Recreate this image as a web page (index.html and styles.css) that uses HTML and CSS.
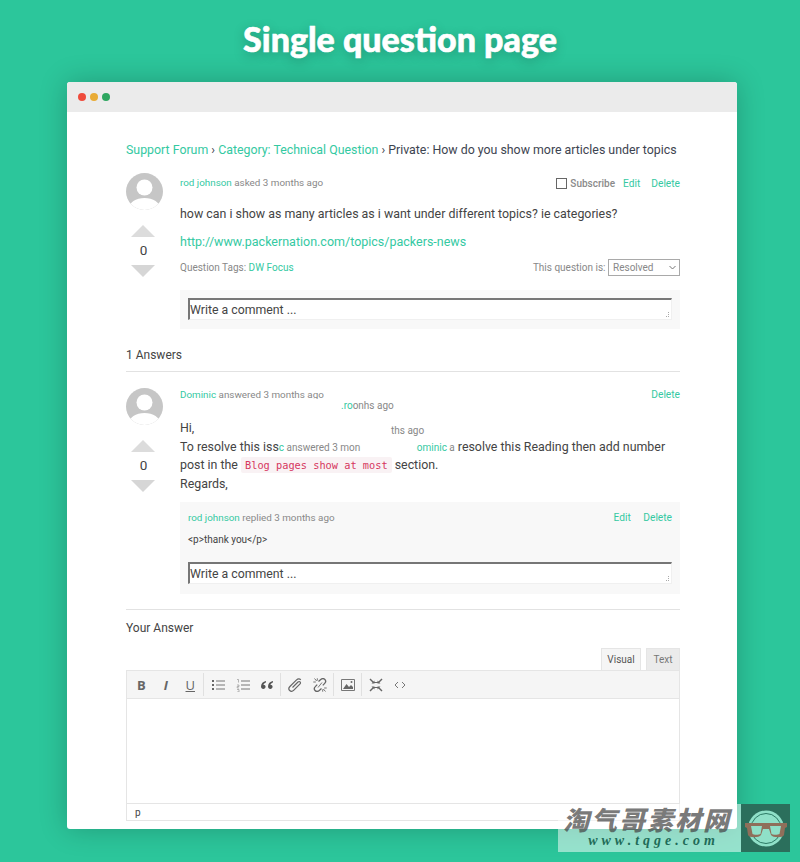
FILE: index.html
```html
<!DOCTYPE html>
<html lang="en">
<head>
<meta charset="UTF-8">
<title>Single question page</title>
<link rel="stylesheet" href="styles.css">
</head>
<body>
<h1 class="page-title">Single question page</h1>

<div class="window">
    <div class="window-bar">
        <span class="dot dot-red"></span>
        <span class="dot dot-yellow"></span>
        <span class="dot dot-green"></span>
    </div>
    <div class="window-body">
        <div class="breadcrumb"><a>Support Forum</a> › <a>Category: Technical Question</a> › Private: How do you show more articles under topics</div>

        <div class="post question">
            <div class="post-side">
                <svg class="avatar" viewBox="0 0 37 37"><use href="#avatar"/></svg>
                <div class="vote-up"></div>
                <div class="vote-count">0</div>
                <div class="vote-down"></div>
            </div>
            <div class="post-main">
                <div class="post-meta">
                    <span><a>rod johnson</a> asked 3 months ago</span>
                    <span class="post-actions q-actions">
                        <label class="subscribe"><input type="checkbox"> Subscribe</label>
                        <a>Edit</a>
                        <a>Delete</a>
                    </span>
                </div>
                <p class="q-text">how can i show as many articles as i want under different topics? ie categories?</p>
                <p class="q-link"><a>http://www.packernation.com/topics/packers-news</a></p>
                <div class="q-footer">
                    <span>Question Tags: <a>DW Focus</a></span>
                    <span class="q-status">This question is:
                        <select class="status-select"><option>Resolved</option></select>
                    </span>
                </div>
                <div class="comment-box">
                    <textarea class="comment-input" rows="1">Write a comment ...</textarea>
                </div>
            </div>
        </div>

        <div class="answers-title">1 Answers</div>

        <div class="post answer">
            <div class="post-side">
                <svg class="avatar" viewBox="0 0 37 37"><use href="#avatar"/></svg>
                <div class="vote-up"></div>
                <div class="vote-count">0</div>
                <div class="vote-down"></div>
            </div>
            <div class="post-main">
                <div class="post-meta">
                    <span class="meta-clipped"><a>Dominic</a> answered 3 months ago</span>
                    <span class="post-actions"><a>Delete</a></span>
                </div>
                <div class="answer-text">
                    Hi,<br>
                    To resolve this iss<span class="ghost-line"><span><a>c</a> answered 3 mon</span><span><a>ominic</a> a</span></span>resolve this Reading then add number<br>
                    post in the <code>Blog pages show at most</code> section.<br>
                    Regards,
                    <div class="ghost ghost-one"><a>.ro</a>onhs ago</div>
                    <div class="ghost ghost-two">ths ago</div>
                </div>
                <div class="reply">
                    <div class="post-meta">
                        <span><a>rod johnson</a> replied 3 months ago</span>
                        <span class="post-actions"><a>Edit</a> <a>Delete</a></span>
                    </div>
                    <p class="reply-text">&lt;p&gt;thank you&lt;/p&gt;</p>
                    <textarea class="comment-input" rows="1">Write a comment ...</textarea>
                </div>
            </div>
        </div>

        <div class="your-answer">Your Answer</div>

        <div class="editor-tabs">
            <span class="tab tab-active">Visual</span>
            <span class="tab">Text</span>
        </div>
        <div class="editor">
            <div class="toolbar">
                <span class="tool tool-text tool-b">B</span>
                <span class="tool tool-text tool-i">I</span>
                <span class="tool tool-text tool-u">U</span>
                <span class="tool-sep"></span>
                <span class="tool"><svg viewBox="0 0 14 14"><path d="M1 2h2v2H1zM1 6h2v2H1zM1 10h2v2H1z" fill="#666"/><path d="M5 3h9M5 7h9M5 11h9" stroke="#777" fill="none"/></svg></span>
                <span class="tool"><svg viewBox="0 0 14 14"><path d="M1 1.500h1.500v3M1 7h2v1.500H1.200V10H3M1 11.500h2V14H1" stroke="#888" stroke-width=".6" fill="none"/><path d="M5 3h9M5 7h9M5 11h9" stroke="#777" fill="none"/></svg></span>
                <span class="tool"><svg viewBox="0 0 14 14"><path d="M6 3C3 3.500 1 5.500 1 8.500 1 10 2 11 3.300 11S5.600 10 5.600 8.800 4.700 6.800 3.400 6.800C3.700 5.800 4.800 4.800 6 4.500zM13 3C10 3.500 8 5.500 8 8.500 8 10 9 11 10.300 11S12.600 10 12.600 8.800 11.700 6.800 10.400 6.800C10.700 5.800 11.800 4.800 13 4.500z" fill="#555"/></svg></span>
                <span class="tool-sep"></span>
                <span class="tool"><svg viewBox="0 0 14 14"><path d="M4.500 9.500 10 4c.7-.7 1.700-.7 2.100 0 .5.600.4 1.500-.3 2.200L5.600 12.400C4.400 13.600 2.800 13.600 1.700 12.500S.7 9.700 1.900 8.500L8.300 2.100C9.700.7 11.600.6 12.800 1.700" stroke="#666" stroke-width="1.200" fill="none"/></svg></span>
                <span class="tool"><svg viewBox="0 0 14 14"><path d="M5.500 3.500 7.700 1.500c1.400-1.200 3.200-1.100 4.200 0s1 2.700-.2 3.900L9.800 7.400M8.500 10.500 6.300 12.500c-1.400 1.200-3.200 1.100-4.200 0s-1-2.700.2-3.900L4.200 6.600" stroke="#666" stroke-width="1.300" fill="none"/><path d="M1.500.5l2.200 2.500M.3 4h2.500M4.300.3v2.300M12.500 13.500 10.300 11M13.700 10h-2.500M9.700 13.700v-2.300M5 9.500 9 4.500" stroke="#666" stroke-width=".9" fill="none"/></svg></span>
                <span class="tool-sep"></span>
                <span class="tool"><svg viewBox="0 0 14 14"><path d="M.5 1.500h13v11H.5z" fill="none" stroke="#777"/><path d="M2 11 5.500 6l2.500 3 2-2 2 2v2z" fill="#666"/><circle cx="10.500" cy="4" r="1" fill="#666"/></svg></span>
                <span class="tool-sep"></span>
                <span class="tool"><svg viewBox="0 0 14 14"><path d="M.5 1.500 1.500.5 4.500 3.500 5.500 2.500V5.500H2.500L3.500 4.500zM13.500 1.500 12.500.5 9.500 3.500 8.500 2.500V5.500H11.500L10.500 4.500zM.5 12.500 1.500 13.500 4.500 10.500 5.500 11.500V8.500H2.500L3.500 9.500zM13.500 12.500 12.500 13.500 9.500 10.500 8.500 11.500V8.500H11.500L10.500 9.500z" fill="#666"/><path d="M5 4.500h4M5 9.500h4" stroke="#666"/></svg></span>
                <span class="tool"><svg viewBox="0 0 14 14"><path d="M5 4 2 7l3 3M9 4l3 3-3 3" stroke="#777" fill="none"/></svg></span>
            </div>
            <div class="editor-area"></div>
            <div class="editor-status">p</div>
        </div>
    </div>
</div>

<div class="watermark">
    <div class="watermark-text">
        <div class="watermark-cn">淘气哥素材网</div>
        <div class="watermark-url">www.tqge.com</div>
    </div>
    <div class="watermark-logo">
        <svg viewBox="0 0 49 48">
            <circle cx="25" cy="24.500" r="18" fill="#8fe0c8"/>
            <circle cx="25" cy="24.500" r="15" fill="none" stroke="#2c7a65"/>
            <path d="M4 19h42v4l-2 1-1 7c-1 3-11 3-13 0l-2-6h-6l-2 6c-2 3-12 3-13 0l-1-7-2-1z" fill="#8f6f5a"/>
            <path d="M10 22h11l-1.500 8c-1.500 1-7 1-8 0zM29 22h11l-1.500 8c-1.500 1-7 1-8 0z" fill="#8fe0c8"/>
        </svg>
    </div>
</div>

<svg class="svg-defs" width="0" height="0">
    <defs>
        <clipPath id="avatar-clip"><circle cx="18.500" cy="18.500" r="18.500"/></clipPath>
        <g id="avatar" clip-path="url(#avatar-clip)">
            <rect width="37" height="37" fill="#c6c6c6"/>
            <circle cx="18.500" cy="14.500" r="8" fill="#fff"/>
            <path d="M2 37c1-8 8-12 16.500-12S34 29 35 37z" fill="#fff"/>
        </g>
    </defs>
</svg>
</body>
</html>
```

FILE: styles.css
```css
* {
  box-sizing: border-box;
}

body {
  margin: 0;
  height: 862px;
  overflow: hidden;
  position: relative;
  background-color: #2cc69b;
  font-family: 'Roboto', 'Liberation Sans', sans-serif;
  color: #444;
}

a {
  color: #34c9a2;
}

.page-title {
  margin: 0;
  height: 82px;
  padding-top: 17px;
  text-align: center;
  font-family: 'Lato', sans-serif;
  font-weight: 900;
  font-size: 34px;
  line-height: 44px;
  color: #fff;
  -webkit-text-stroke: 0.6px #fff;
  text-shadow: 0 3px 12px rgba(0, 0, 0, 0.25);
}

.window {
  width: 670px;
  height: 747px;
  margin-left: 67px;
  background-color: #fff;
  border-radius: 3px;
  box-shadow: 0 0 28px rgba(0, 0, 0, 0.22);
  overflow: hidden;
}

.window-bar {
  display: flex;
  align-items: center;
  gap: 4px;
  height: 30px;
  padding-left: 11px;
  background-color: #ebebeb;
}

.dot {
  width: 8px;
  height: 8px;
  border-radius: 50%;
}

.dot-red { background-color: #ef4b3c; }
.dot-yellow { background-color: #e9ab35; }
.dot-green { background-color: #2ea660; }

.window-body {
  padding: 29px 57px 0 59px;
}

.breadcrumb {
  font-size: 12.370px;
  line-height: 18px;
  color: #3d4450;
  white-space: nowrap;
}

.post {
  display: flex;
}

.question {
  margin-top: 14px;
}

.post-side {
  flex: 0 0 54px;
  width: 54px;
}

.avatar {
  display: block;
  width: 37px;
  height: 37px;
}

.vote-up,
.vote-down {
  width: 0;
  height: 0;
  margin-left: 5px;
  border-left: 12.500px solid transparent;
  border-right: 12.500px solid transparent;
}

.vote-up {
  margin-top: 15px;
  border-bottom: 12px solid #dcdcdc;
}

.vote-down {
  border-top: 12px solid #d6d6d6;
}

.vote-count {
  width: 35px;
  height: 28px;
  font-size: 13.500px;
  line-height: 27px;
  text-align: center;
  color: #444;
}

.post-main {
  flex: 1;
  min-width: 0;
}

.post-meta {
  display: flex;
  justify-content: space-between;
  font-size: 9.850px;
  line-height: 18px;
  color: #888;
}

.question .post-meta {
  padding-top: 1px;
}

.answer .post-main > .post-meta {
  margin-top: -2px;
}

.meta-clipped {
  height: 13px;
  overflow: hidden;
}

.post-actions {
  font-size: 10.200px;
}

.post-actions a {
  margin-left: 10px;
}

.q-actions {
  display: flex;
  align-items: center;
  padding-top: 1px;
}

.q-actions .subscribe + a {
  margin-left: 8px;
}

.q-actions a + a {
  margin-left: 11px;
}

.subscribe {
  display: flex;
  align-items: center;
  gap: 3px;
  font-size: 10px;
  font-weight: 500;
  color: #8a8a8a;
}

.subscribe input {
  appearance: none;
  width: 11px;
  height: 11px;
  margin: 0;
  position: relative;
  top: -1px;
  background-color: #fff;
  border: 1px solid #666;
}

.q-text {
  margin: 12px 0 0;
  font-size: 12.400px;
  line-height: 18px;
  color: #444;
}

.q-link {
  margin: 10px 0 0;
  font-size: 12.500px;
  line-height: 18px;
}

.q-footer {
  display: flex;
  justify-content: space-between;
  align-items: center;
  margin-top: 7px;
  height: 18px;
  font-size: 10px;
  color: #888;
}

.status-select {
  appearance: none;
  width: 72px;
  height: 17px;
  padding: 0 0 0 4px;
  font-family: 'Roboto', sans-serif;
  font-size: 10px;
  color: #888;
  background: #fff url("data:image/svg+xml,%3Csvg xmlns='http://www.w3.org/2000/svg' width='7' height='5'%3E%3Cpath d='M.5 1l3 3 3-3' fill='none' stroke='%23777'/%3E%3C/svg%3E") no-repeat right 3px center;
  border: 1px solid #a9a9a9;
}

.comment-box {
  margin-top: 14px;
  height: 39px;
  padding: 8px;
  background-color: #f8f8f8;
}

.comment-input {
  display: block;
  width: 100%;
  height: 22px;
  padding: 0;
  resize: none;
  font-family: 'Roboto', sans-serif;
  font-size: 12.300px;
  line-height: 20px;
  color: #444;
  background-color: #fff;
  background-image: linear-gradient(#aaa, #aaa), linear-gradient(#aaa, #aaa), linear-gradient(#aaa, #aaa), linear-gradient(#aaa, #aaa);
  background-repeat: no-repeat;
  background-size: 1px 1px;
  background-position: right 2px bottom 2px, right 4px bottom 2px, right 2px bottom 4px, right 2px bottom 6px;
  border-style: solid;
  border-width: 2px 1px 1px 2px;
  border-color: #767676 #f0f0f0 #f0f0f0 #767676;
  overflow: hidden;
}

.answers-title {
  margin-top: 17px;
  height: 26px;
  font-size: 12px;
  line-height: 18px;
  border-bottom: 1px solid #e2e2e2;
}

.answer {
  margin-top: 16px;
  padding-bottom: 15px;
  border-bottom: 1px solid #e2e2e2;
}

.answer-text {
  position: relative;
  margin-top: 15px;
  font-size: 12.400px;
  line-height: 18.500px;
  color: #444;
}

code {
  padding: 2px 4px;
  font-family: 'DejaVu Sans Mono', 'Liberation Mono', monospace;
  font-size: 10.300px;
  color: #d6375e;
  background-color: #f9f2f4;
  border-radius: 2px;
}

.ghost {
  position: absolute;
  font-size: 10px;
  line-height: 14px;
  color: #888;
  white-space: nowrap;
}

.ghost-one {
  top: -20px;
  left: 161px;
}

.ghost-two {
  top: 5px;
  left: 211px;
}

.ghost-line {
  display: inline-flex;
  justify-content: space-between;
  width: 179px;
  padding-right: 3px;
  font-size: 10px;
  line-height: 14px;
  color: #888;
}

.reply {
  margin-top: 9px;
  height: 92px;
  padding: 7px 8px 0;
  background-color: #f8f8f8;
}

.reply-text {
  margin: 4px 0 0;
  font-size: 10px;
  line-height: 18px;
  color: #444;
}

.reply .comment-input {
  margin-top: 13px;
}

.your-answer {
  margin-top: 9px;
  font-size: 12px;
  line-height: 18px;
}

.editor-tabs {
  display: flex;
  justify-content: flex-end;
  gap: 5px;
  margin-top: 11px;
  height: 22px;
}

.tab {
  width: 34px;
  font-size: 10px;
  line-height: 22px;
  text-align: center;
  color: #777;
  background-color: #ebebeb;
  border: 1px solid #e5e5e5;
  border-bottom: 0;
}

.tab-active {
  width: 40px;
  color: #555;
  background-color: #f5f5f5;
}

.editor {
  border: 1px solid #e5e5e5;
}

.toolbar {
  display: flex;
  align-items: center;
  height: 28px;
  padding-left: 2px;
  background-color: #f5f5f5;
  border-bottom: 1px solid #e5e5e5;
}

.tool {
  display: flex;
  align-items: center;
  justify-content: center;
  width: 24.500px;
  height: 24px;
  color: #666;
}

.tool svg {
  width: 14px;
  height: 14px;
}

.tool-text {
  font-family: 'Open Sans', sans-serif;
  font-size: 13px;
}

.tool-b { font-weight: 700; }
.tool-i { font-style: italic; font-weight: 700; }
.tool-u { text-decoration: underline; }

.tool-sep {
  width: 1px;
  height: 23px;
  margin: 0 2px 0 0.500px;
  background-color: #e0e0e0;
}

.editor-area {
  height: 104px;
  background-color: #fff;
}

.editor-status {
  height: 17px;
  padding-left: 8px;
  font-size: 10px;
  line-height: 17px;
  color: #444;
  border-top: 1px solid #e5e5e5;
}

.watermark {
  position: absolute;
  left: 558px;
  top: 804px;
  display: flex;
  width: 232px;
  height: 48px;
}

.watermark-text {
  flex: 1;
  padding-right: 4px;
  background-color: rgba(255, 255, 255, 0.5);
  text-align: center;
}

.watermark-cn {
  height: 30px;
  padding-right: 1px;
  font-family: 'Noto Sans CJK SC', sans-serif;
  font-weight: 900;
  font-style: italic;
  font-size: 26px;
  line-height: 30px;
  letter-spacing: 2px;
  color: rgba(70, 70, 70, 0.72);
  white-space: nowrap;
}

.watermark-url {
  padding-left: 12px;
  font-family: 'Liberation Serif', serif;
  font-weight: 700;
  font-style: italic;
  font-size: 14px;
  line-height: 14px;
  letter-spacing: 4px;
  color: #1f6b58;
}

.watermark-logo {
  width: 49px;
  background-color: #2b6f5c;
}

.watermark-logo svg {
  display: block;
  width: 49px;
  height: 48px;
}

.svg-defs {
  position: absolute;
}
```
